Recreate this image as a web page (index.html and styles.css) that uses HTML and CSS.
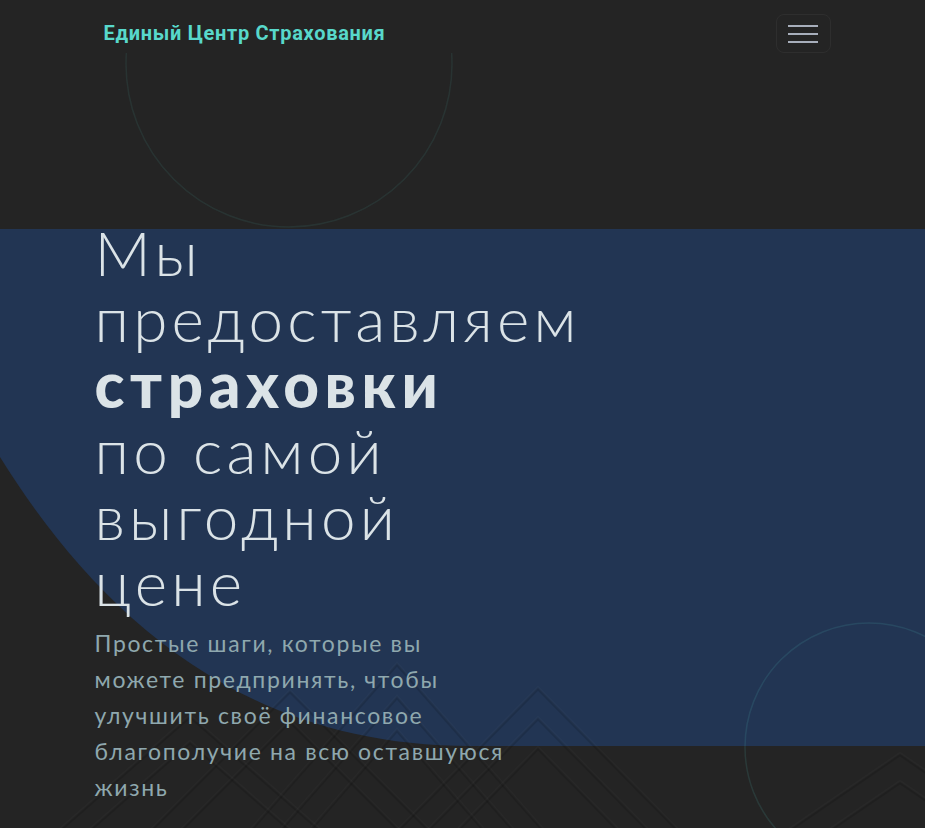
FILE: index.html
```html
<!DOCTYPE html>
<html lang="ru">
<head>
<meta charset="utf-8">
<title>Единый Центр Страхования</title>
<link rel="stylesheet" href="styles.css">
</head>
<body>
<header class="nav">
  <div class="container nav-inner">
    <a class="brand" href="#">Единый Центр Страхования</a>
    <button class="burger" type="button" aria-label="Меню">
      <span class="bar"></span><span class="bar"></span><span class="bar"></span>
    </button>
  </div>
</header>
<section class="hero">
  <svg class="hero-bg" viewBox="0 0 925 775" width="925" height="775" aria-hidden="true">
    <path class="band" d="M0 176 H925 V693 H470 C245 693 100 565 0 404 Z"/>
    <g class="tri-dark">
      <polyline points="-10,839 190,664 390,839"/>
      <polyline points="20,839 190,690 360,839"/>
      <polyline points="90,839 290,639 490,839"/>
      <polyline points="120,839 290,669 460,839"/>
      <polyline points="197,839 397,612 597,839"/>
      <polyline points="227,839 397,645 567,839"/>
      <polyline points="257,839 397,678 537,839"/>
      <polyline points="338,839 538,636 738,839"/>
      <polyline points="368,839 538,666 708,839"/>
      <polyline points="398,839 538,696 678,839"/>
      <polyline points="700,839 900,702 1100,839"/>
      <polyline points="740,839 900,730 1060,839"/>
    </g>
    <g class="tri-light">
      <polyline points="-10,837 190,662 390,837"/>
      <polyline points="20,837 190,688 360,837"/>
      <polyline points="90,837 290,637 490,837"/>
      <polyline points="120,837 290,667 460,837"/>
      <polyline points="197,837 397,610 597,837"/>
      <polyline points="227,837 397,643 567,837"/>
      <polyline points="257,837 397,676 537,837"/>
      <polyline points="338,837 538,634 738,837"/>
      <polyline points="368,837 538,664 708,837"/>
      <polyline points="398,837 538,694 678,837"/>
      <polyline points="700,837 900,700 1100,837"/>
      <polyline points="740,837 900,728 1060,837"/>
    </g>
    <circle class="ring" cx="289" cy="11" r="163"/>
    <circle class="ring ring-b" cx="869" cy="694" r="124"/>
  </svg>
  <div class="container hero-content">
    <h1 class="title">
      <span class="line">Мы</span>
      <span class="line">предоставляем</span>
      <strong class="line">страховки</strong>
      <span class="line">по самой</span>
      <span class="line">выгодной</span>
      <span class="line">цене</span>
    </h1>
    <p class="lead">Простые шаги, которые вы<br>можете предпринять, чтобы<br>улучшить своё финансовое<br>благополучие на всю оставшуюся<br>жизнь</p>
  </div>
</section>
</body>
</html>
```
FILE: styles.css
```css
html, body {
  margin: 0;
  padding: 0;
}
body {
  background: #242424;
  height: 828px;
  overflow: hidden;
  font-family: "Lato", "Open Sans", sans-serif;
}
.container {
  width: 736px;
  margin: 0 auto;
  box-sizing: border-box;
}
.nav {
  height: 53px;
  box-sizing: border-box;
  padding-top: 14px;
}
.nav-inner {
  display: flex;
  justify-content: space-between;
  align-items: center;
}
.brand {
  margin-left: 9px;
  margin-top: -1px;
  color: #58d8cb;
  font-family: "Roboto", sans-serif;
  font-weight: 700;
  font-size: 20px;
  letter-spacing: 0.7px;
  text-decoration: none;
}
.burger {
  width: 55px;
  height: 39px;
  background: transparent;
  border: 1px solid #2e2e2e;
  border-radius: 8px;
  display: flex;
  flex-direction: column;
  align-items: center;
  justify-content: center;
  gap: 6px;
  padding: 0;
}
.bar {
  display: block;
  width: 30px;
  height: 2px;
  background: #a7aebb;
}
.hero {
  position: relative;
  height: 775px;
  overflow: hidden;
}
.hero-bg {
  position: absolute;
  left: 0;
  top: 0;
  display: block;
}
.band {
  fill: #223553;
}
.tri-light polyline {
  fill: none;
  stroke: rgba(255, 255, 255, 0.018);
  stroke-width: 2.5;
}
.tri-dark polyline {
  fill: none;
  stroke: rgba(0, 0, 0, 0.12);
  stroke-width: 2.5;
}
.ring {
  fill: none;
  stroke: rgba(88, 216, 203, 0.09);
  stroke-width: 1.5;
}
.ring-b {
  stroke: rgba(88, 216, 203, 0.12);
}
.hero-content {
  position: relative;
  padding-top: 166px;
}
.title {
  margin: 0;
  color: #dbe3e7;
  font-weight: 300;
  font-size: 62px;
  line-height: 66px;
  letter-spacing: 4.2px;
}
.title .line {
  display: block;
}
.title strong {
  font-weight: 900;
  letter-spacing: 5.6px;
}
.lead {
  margin: 10px 0 0;
  color: #8fa8ae;
  font-size: 23px;
  line-height: 36px;
  font-weight: 400;
  letter-spacing: 1.65px;
}
```
